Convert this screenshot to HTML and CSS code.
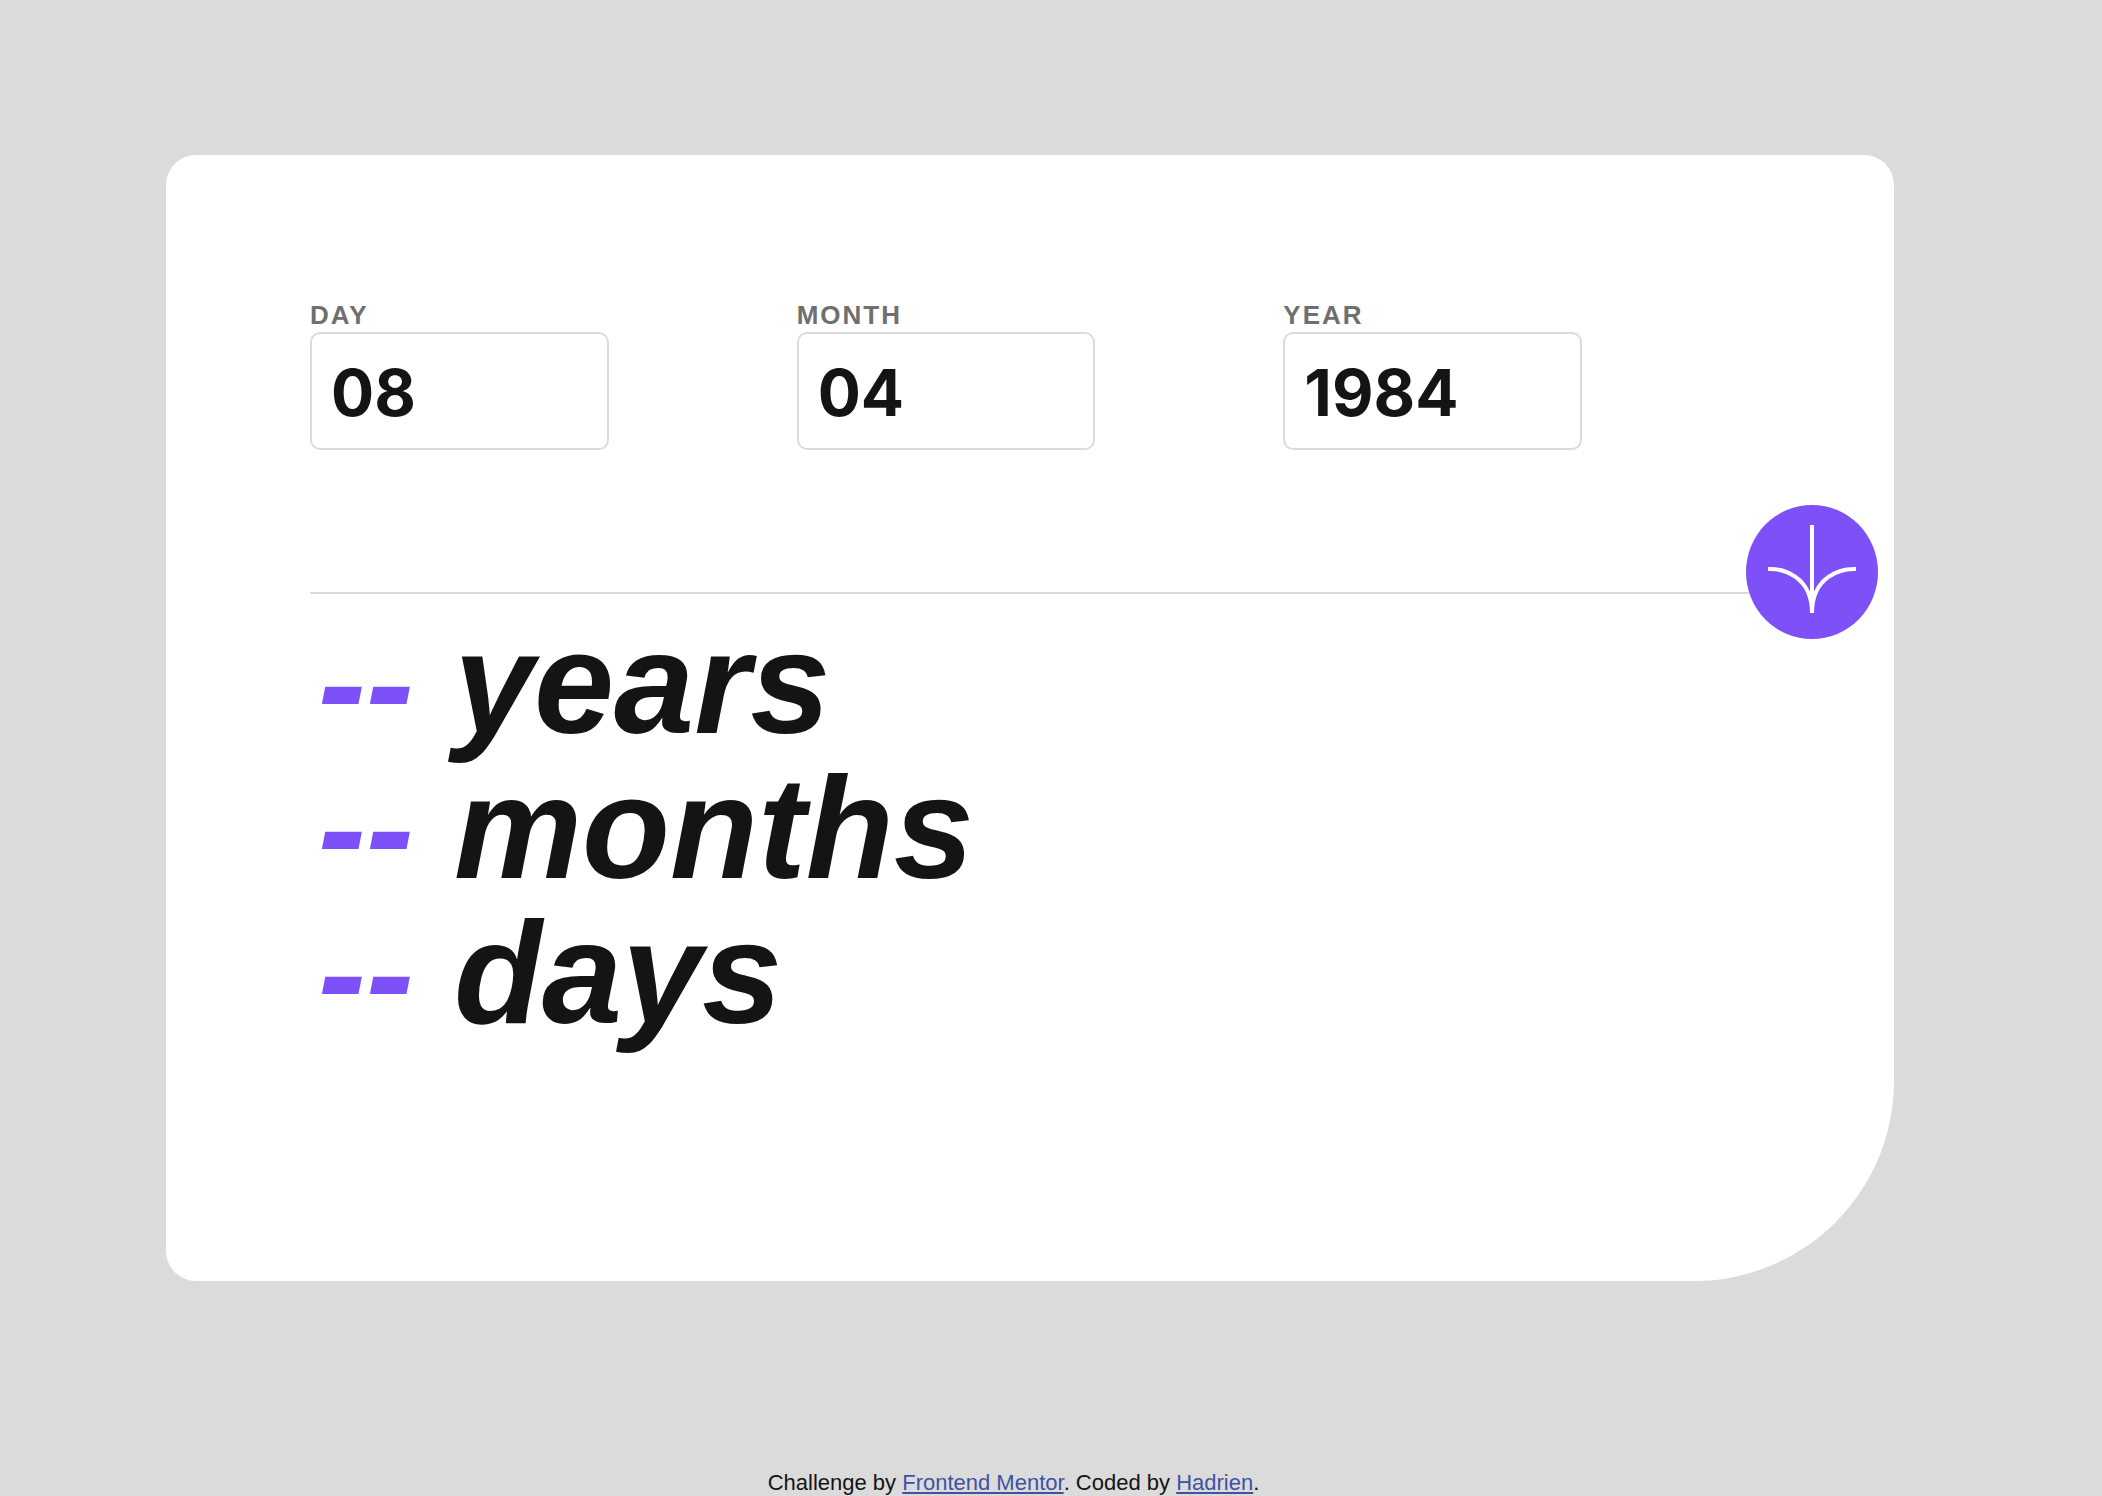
FILE: index.html
```html
<!DOCTYPE html>
<html lang="en">
<head>
  <meta charset="utf-8">
  <meta name="viewport" content="width=device-width, initial-scale=1">
  <title>Age calculator app</title>
  <link rel="stylesheet" href="styles.css">
</head>
<body>
  <main class="page">
    <form class="card">
      <div class="fields">
        <div class="field">
          <label class="field-label" for="day">Day</label>
          <input class="field-input" id="day" type="text" inputmode="numeric" value="08">
        </div>
        <div class="field">
          <label class="field-label" for="month">Month</label>
          <input class="field-input" id="month" type="text" inputmode="numeric" value="04">
        </div>
        <div class="field">
          <label class="field-label" for="year">Year</label>
          <input class="field-input" id="year" type="text" inputmode="numeric" value="1984">
        </div>
      </div>
      <div class="divider">
        <button class="submit" type="button" aria-label="Calculate age">
          <svg class="submit-icon" viewBox="0 0 46 44" aria-hidden="true">
            <path fill="none" stroke="#fff" stroke-width="2" d="M1 22.019C8.333 21.686 23 25.616 23 44M23 44V0M45 22.019C37.667 21.686 23 25.616 23 44"/>
          </svg>
        </button>
      </div>
      <div class="results">
        <p class="result"><span class="result-value">--</span> years</p>
        <p class="result"><span class="result-value">--</span> months</p>
        <p class="result"><span class="result-value">--</span> days</p>
      </div>
    </form>
  </main>
  <footer class="attribution">
    Challenge by <a class="attribution-link" href="https://www.frontendmentor.io">Frontend Mentor</a>. Coded by <a class="attribution-link" href="#">Hadrien</a>.
  </footer>
</body>
</html>
```

FILE: styles.css
```css
* {
  box-sizing: border-box;
}

body {
  display: flex;
  flex-direction: column;
  min-height: 100vh;
  margin: 0;
  background: #dbdbdb;
  color: #141414;
  font-family: "Liberation Sans", Arial, sans-serif;
}

.page {
  padding: 155px 208px 0 166px;
}

.card {
  padding: 144px 144px 235px;
  background: #fff;
  border-radius: 30px 30px 200px 30px;
}

.fields {
  display: grid;
  grid-template-columns: repeat(3, 1fr);
  gap: 20px;
}

.field {
  display: flex;
  flex-direction: column;
}

.field-label {
  color: #6f6f6f;
  font-size: 26px;
  font-weight: 700;
  line-height: 33px;
  letter-spacing: 2px;
  text-transform: uppercase;
}

.field-input {
  width: 64%;
  height: 118px;
  padding: 2px 19px 0;
  border: 2px solid #dbdbdb;
  border-radius: 10px;
  background: #fff;
  color: #141414;
  font-family: Inter, sans-serif;
  font-size: 64px;
  font-weight: 700;
}

.divider {
  position: relative;
  height: 2px;
  margin-top: 142px;
  background: #dbdbdb;
}

.submit {
  position: absolute;
  top: -87px;
  right: -128px;
  width: 132px;
  height: 134px;
  padding: 20px 20px 26px;
  border: 0;
  border-radius: 50%;
  background: #7d50f8;
}

.submit-icon {
  display: block;
  width: 92px;
  height: 88px;
}

.results {
  margin-top: 17px;
  padding-left: 8px;
}

.result {
  margin: 0;
  font-size: 144px;
  font-style: italic;
  font-weight: 700;
  line-height: 145px;
}

.result-value {
  color: #7d50f8;
}

.attribution {
  margin-top: auto;
  padding-right: 75px;
  font-size: 22px;
  line-height: 26px;
  text-align: center;
}

.attribution-link {
  color: #4052a3;
}
```
